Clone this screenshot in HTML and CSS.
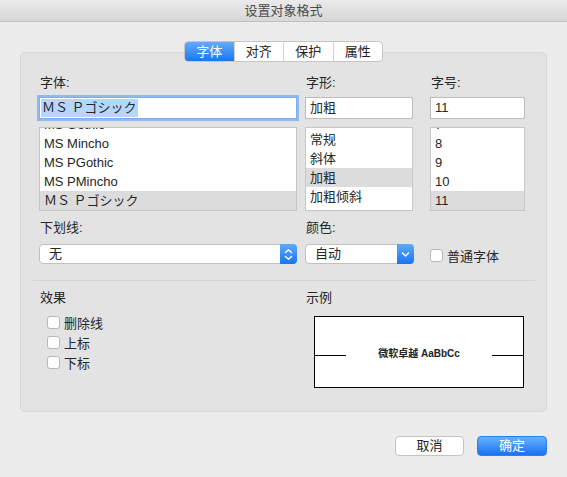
FILE: index.html
```html
<!DOCTYPE html>
<html lang="zh">
<head>
<meta charset="utf-8">
<title>设置对象格式</title>
<link rel="stylesheet" href="styles.css">
</head>
<body>
<div class="titlebar">设置对象格式</div>
<div class="content">
  <div class="tabs">
    <div class="seg">
      <span class="tab active">字体</span>
      <span class="tab">对齐</span>
      <span class="tab">保护</span>
      <span class="tab">属性</span>
    </div>
  </div>
  <div class="group">
    <div class="top">
      <div class="col col1">
        <div class="label">字体:</div>
        <div class="input focus"><span class="sel-text">ＭＳ Ｐゴシック</span></div>
        <div class="list">
          <div class="list-inner scrolled">
            <div class="item">MS Gothic</div>
            <div class="item">MS Mincho</div>
            <div class="item">MS PGothic</div>
            <div class="item">MS PMincho</div>
            <div class="item selected">ＭＳ Ｐゴシック</div>
          </div>
        </div>
      </div>
      <div class="col col2">
        <div class="label">字形:</div>
        <div class="input">加粗</div>
        <div class="list">
          <div class="list-inner padded">
            <div class="item">常规</div>
            <div class="item">斜体</div>
            <div class="item selected">加粗</div>
            <div class="item">加粗倾斜</div>
          </div>
        </div>
      </div>
      <div class="col col3">
        <div class="label">字号:</div>
        <div class="input">11</div>
        <div class="list">
          <div class="list-inner scrolled">
            <div class="item">7</div>
            <div class="item">8</div>
            <div class="item">9</div>
            <div class="item">10</div>
            <div class="item selected">11</div>
          </div>
        </div>
      </div>
    </div>

    <div class="row2">
      <div class="u-col">
        <div class="label">下划线:</div>
        <div class="select">
          <span class="select-text">无</span>
          <span class="select-btn">
            <svg width="9" height="13" viewBox="0 0 9 13"><path d="M1.5 4.5 L4.5 1.8 L7.5 4.5 M1.5 8.5 L4.5 11.2 L7.5 8.5" fill="none" stroke="#fff" stroke-width="1.4" stroke-linecap="round" stroke-linejoin="round"/></svg>
          </span>
        </div>
      </div>
      <div class="c-col">
        <div class="label">颜色:</div>
        <div class="select">
          <span class="select-text">自动</span>
          <span class="select-btn">
            <svg width="9" height="7" viewBox="0 0 9 7"><path d="M1.5 2 L4.5 5 L7.5 2" fill="none" stroke="#fff" stroke-width="1.4" stroke-linecap="round" stroke-linejoin="round"/></svg>
          </span>
        </div>
      </div>
      <div class="n-col">
        <label class="check"><span class="box"></span><span>普通字体</span></label>
      </div>
    </div>

    <div class="sep"></div>

    <div class="bottom">
      <div class="effects">
        <div class="label">效果</div>
        <div class="checks">
          <label class="check"><span class="box"></span><span>删除线</span></label>
          <label class="check"><span class="box"></span><span>上标</span></label>
          <label class="check"><span class="box"></span><span>下标</span></label>
        </div>
      </div>
      <div class="sample-col">
        <div class="label">示例</div>
        <div class="sample">
          <span class="line"></span>
          <span class="sample-text">微软卓越 AaBbCc</span>
          <span class="line"></span>
        </div>
      </div>
    </div>
  </div>

  <div class="buttons">
    <button class="btn cancel">取消</button>
    <button class="btn ok">确定</button>
  </div>
</div>
</body>
</html>
```

FILE: styles.css
```css
* { box-sizing: border-box; }
html, body { margin: 0; padding: 0; }
body {
  width: 567px;
  height: 477px;
  overflow: hidden;
  background: #ececec;
  font-family: "Liberation Sans", "Noto Sans CJK SC", sans-serif;
  font-size: 13px;
  color: #262626;
}
.titlebar {
  height: 22px;
  background: linear-gradient(#ebebeb, #d7d7d7);
  border-bottom: 1px solid #bfbfbf;
  text-align: center;
  line-height: 21px;
  color: #4a4a4a;
}
.content { padding-top: 19px; }

.tabs {
  display: flex;
  justify-content: center;
  position: relative;
  z-index: 1;
  margin-bottom: -10px;
}
.seg {
  display: flex;
  width: 199px;
  height: 21px;
  background: #fff;
  border: 1px solid #c5c5c5;
  border-radius: 4px;
  overflow: hidden;
}
.tab {
  flex: 1;
  text-align: center;
  line-height: 19px;
  border-left: 1px solid #d2d2d2;
  color: #222;
}
.tab:first-child { border-left: none; }
.tab.active {
  background: linear-gradient(#62acfb, #1a77f2);
  color: #fff;
}

.group {
  margin: 0 20px;
  height: 360px;
  background: #e3e3e3;
  border: 1px solid #d8d8d8;
  border-radius: 5px;
  padding: 21px 21px 0 18px;
}
.label {
  height: 18px;
  line-height: 18px;
  padding-left: 1px;
  color: #262626;
}
.top { display: flex; }
.col1 { width: 258px; }
.col2 { width: 108px; margin-left: 8px; }
.col3 { width: 95px; margin-left: 17px; }

.input {
  margin-top: 5px;
  height: 22px;
  background: #fff;
  border: 1px solid #bcbcbc;
  line-height: 20px;
  padding-left: 4px;
  white-space: nowrap;
}
.input.focus {
  border-color: #7eaee9;
  box-shadow: 0 0 0 2px #8fbaf0;
  padding-left: 1px;
}
.sel-text {
  display: inline-block;
  background: #b5d7fd;
  line-height: 18px;
  padding: 0 1px;
}
.list {
  margin-top: 8px;
  height: 84px;
  background: #fff;
  border: 1px solid #c6c6c6;
  overflow: hidden;
}
.list-inner.scrolled { margin-top: -13px; }
.list-inner.padded { padding-top: 2px; }
.item {
  height: 19px;
  line-height: 19px;
  padding-left: 4px;
  white-space: nowrap;
}
.item.selected { background: #dcdcdc; }

.row2 { display: flex; margin-top: 8px; }
.u-col { width: 258px; }
.c-col { width: 109px; margin-left: 8px; }
.n-col { margin-left: 16px; padding-top: 26px; }
.select {
  margin-top: 7px;
  height: 20px;
  background: #fff;
  border: 1px solid #c0c0c0;
  border-radius: 4px;
  display: flex;
  align-items: stretch;
}
.select-text {
  flex: 1;
  padding-left: 9px;
  line-height: 18px;
}
.select-btn {
  width: 17px;
  margin: -1px -1px -1px 0;
  background: linear-gradient(#5eaafb, #1a74f1);
  border-radius: 0 4px 4px 0;
  display: flex;
  align-items: center;
  justify-content: center;
}

.check {
  display: flex;
  align-items: center;
  height: 20px;
  gap: 4px;
}
.box {
  width: 13px;
  height: 13px;
  background: #fff;
  border: 1px solid #b8b8b8;
  border-radius: 3px;
}

.sep {
  height: 1px;
  background: #d3d3d3;
  margin: 15px -10px 0 -6px;
}

.bottom { display: flex; margin-top: 8px; }
.effects { width: 266px; }
.checks { margin-top: 5px; padding-left: 8px; }
.sample-col { flex: 1; }
.sample {
  margin: 9px 0 0 9px;
  width: 210px;
  height: 72px;
  background: #fff;
  border: 1px solid #000;
  display: flex;
  align-items: center;
}
.line {
  flex: 0 0 31px;
  height: 1px;
  background: #000;
  margin-top: 6px;
}
.sample-text {
  flex: 1;
  text-align: center;
  font-size: 10px;
  font-weight: bold;
  color: #222;
}

.buttons {
  display: flex;
  justify-content: flex-end;
  gap: 13px;
  margin: 24px 20px 0 0;
}
.btn {
  width: 69px;
  height: 20px;
  border-radius: 4px;
  font-family: inherit;
  font-size: 13px;
  line-height: 18px;
  padding: 0;
  cursor: default;
}
.btn.cancel {
  background: #fff;
  border: 1px solid #c3c3c3;
  color: #222;
}
.btn.ok {
  width: 70px;
  background: linear-gradient(#69b1fc, #1673f1);
  border: 1px solid #2d7ff0;
  color: #fff;
}
```
